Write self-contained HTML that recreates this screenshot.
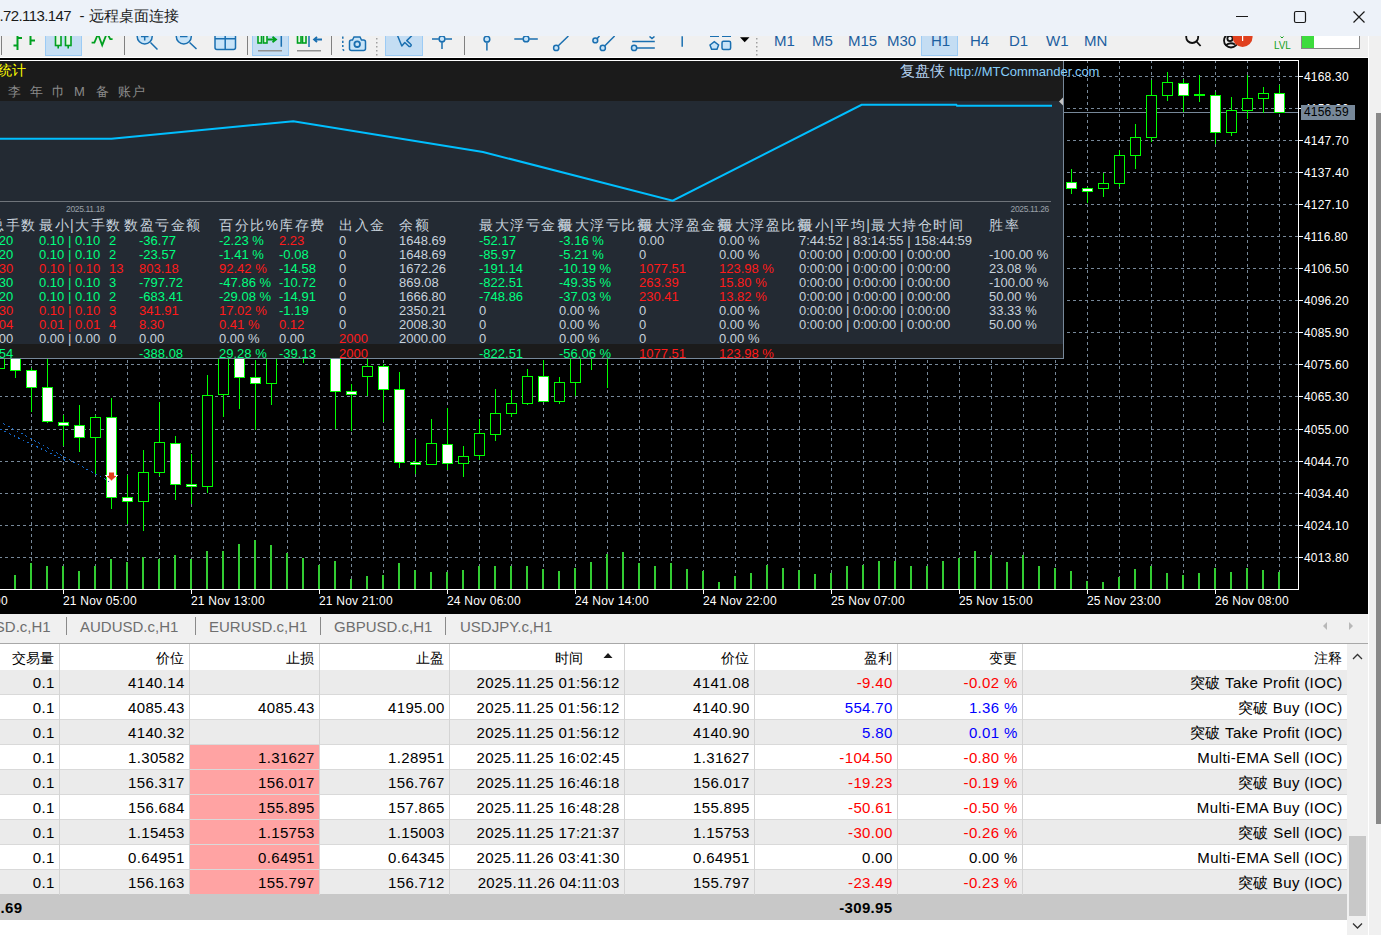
<!DOCTYPE html>
<html><head><meta charset="utf-8">
<style>
html,body{margin:0;padding:0;width:1381px;height:935px;overflow:hidden;background:#ffffff;font-family:"Liberation Sans",sans-serif;}
#root{position:relative;width:1381px;height:935px;overflow:hidden;}
.pl{position:absolute;left:1304px;font-size:12px;line-height:16px;color:#ffffff;white-space:nowrap;letter-spacing:0.2px}
.tl{position:absolute;top:593px;font-size:12px;line-height:16px;color:#ffffff;white-space:nowrap;letter-spacing:0.2px}
.curp{position:absolute;left:1301px;top:105px;width:54px;height:15px;background:#778899;color:#000;font-size:12px;line-height:15px;padding-left:3px;box-sizing:border-box;letter-spacing:0.2px}
.st{position:absolute;font-size:13px;line-height:16px;white-space:nowrap}
.sh{position:absolute;top:217px;font-size:14px;line-height:16px;color:#c8d2dc;white-space:nowrap;letter-spacing:1.5px}
.th{position:absolute;top:645px;height:26px;line-height:26px;text-align:right;font-size:14px;color:#000;white-space:nowrap}
.td{position:absolute;height:25px;line-height:25px;text-align:right;font-size:15px;letter-spacing:0.35px;white-space:nowrap}
.tab{position:absolute;top:613px;height:28px;line-height:28px;font-size:15px;color:#6e6e6e;white-space:nowrap}
.tf{position:absolute;top:-5.5px;font-size:15px;line-height:20px;color:#1c5fa0;white-space:nowrap}
</style></head><body><div id="root">
<!-- title bar -->
<div style="position:absolute;left:0;top:0;width:1381px;height:36px;background:#edf2f9"></div>
<div style="position:absolute;left:-0.5px;top:7px;font-size:15px;line-height:18px;color:#1a1a1a;white-space:nowrap;letter-spacing:-0.6px">.72.113.147</div>
<div style="position:absolute;left:79.5px;top:7px;font-size:15px;line-height:18px;color:#1a1a1a;white-space:nowrap">-</div>
<div style="position:absolute;left:88.6px;top:7px;font-size:15px;line-height:18px;color:#1a1a1a;white-space:nowrap">远程桌面连接</div>
<svg style="position:absolute;left:1230px;top:5px" width="150" height="24">
 <rect x="6" y="11" width="12" height="1" fill="#1a1a1a"/>
 <rect x="64.5" y="6.5" width="11" height="11" rx="1.5" fill="none" stroke="#1a1a1a" stroke-width="1.2"/>
 <path d="M123.5 6.5 L134.5 17.5 M134.5 6.5 L123.5 17.5" stroke="#1a1a1a" stroke-width="1.2"/>
</svg>
<!-- toolbar -->
<div style="position:absolute;left:0;top:36px;width:1368px;height:21px;background:#f0f0f0;overflow:hidden">
<svg width="1368" height="21" style="position:absolute;left:0;top:0" viewBox="0 36 1368 21">
<g fill="#808080">
<rect x="1" y="36" width="1" height="19"/><rect x="124" y="36" width="1" height="19"/><rect x="247" y="36" width="1" height="19"/>
<rect x="331" y="36" width="1" height="19"/><rect x="464" y="36" width="1" height="19"/>
</g>
<g fill="#c4ddf3" stroke="#9ccbf5" stroke-width="1">
<rect x="45.5" y="30.5" width="36" height="25"/>
<rect x="252.5" y="30.5" width="36" height="25"/>
<rect x="385.5" y="30.5" width="37" height="25"/>
<rect x="921.5" y="30.5" width="36" height="25"/>
</g>
<g stroke="#00a020" stroke-width="2" fill="none">
<path d="M17.5 34 V50 M13.5 45.5 H17.5 M17.5 38 H22"/>
<path d="M30.5 34 V45 M30.5 40.5 H35"/>
<path d="M91.6 42.7 H94.4 L98 34 L102.2 45.2 L107 33 L110.3 39.1 H112.6" stroke-width="1.8"/>
</g>
<g stroke="#00a020" stroke-width="1.6" fill="#e4f8e4">
<rect x="55.5" y="33" width="5.5" height="12.5"/><rect x="65.5" y="33" width="5.5" height="12.5"/>
</g>
<g stroke="#00a020" stroke-width="1.6"><path d="M58.2 45.5 V48.5 M68.2 45.5 V48.5"/></g>
<g stroke="#1a6fb0" stroke-width="1.5" fill="#c8e4f8">
<circle cx="144.7" cy="36.5" r="7.5"/><circle cx="183.8" cy="36.5" r="7.5"/>
<rect x="215" y="33" width="20.5" height="16.5" rx="2"/>
<path d="M349.5 42 Q349.5 40 351.5 40 H352.5 L354 37 H360 L361.5 40 H363.5 Q365.5 40 365.5 42 V48.5 Q365.5 50.5 363.5 50.5 H351.5 Q349.5 50.5 349.5 48.5 Z"/>
<circle cx="442" cy="38.9" r="2.9"/><circle cx="486.9" cy="39.2" r="2.9"/><circle cx="526.1" cy="38.9" r="2.9"/>
<circle cx="556.2" cy="47.9" r="2.6"/><circle cx="595.3" cy="40.4" r="2.4"/><circle cx="602.8" cy="47.9" r="2.6"/>
<circle cx="634.1" cy="47.9" r="2.6"/>
<path d="M710 45 l4.3 -3.3 l4.3 3.3 l-1.6 4.3 h-5.4 z"/>
<rect x="722" y="41.2" width="8.6" height="8.2" rx="1.5"/>
</g>
<g stroke="#1a6fb0" stroke-width="1.5" fill="none">
<path d="M144.7 34 V40.5 M141 36.5 H148.5"/><path d="M150.5 42.5 L157.5 49.5"/>
<path d="M180 36.5 H187.5"/><path d="M189.6 42.5 L196.5 49"/>
<path d="M215 38.7 H235.5 M225.2 33 V49.5"/>
<path d="M281.3 34 V46.7 M309 36 V47"/>
<path d="M342.8 36.5 V48.5 q0 2 2.5 2.5" stroke-dasharray="2.2,2"/>
<path d="M396.5 33 L401.8 46 L404.8 42.5 L408.8 46.3 Q409.8 47 410.8 46 Q411.6 45 410.8 44.3 L406.8 40.6 L411.5 36 L413 33 Z" stroke-linejoin="round"/>
<path d="M432 38.9 H438.8 M445.2 38.9 H452 M442 42.1 V49.1"/>
<path d="M486.9 42.4 V50.5"/>
<path d="M514.3 38.9 H522.9 M529.3 38.9 H537.8"/>
<path d="M558.3 45.8 L568.4 36"/><path d="M597.2 38.5 L599.5 36"/><path d="M604.9 45.8 L614.6 36"/>
<path d="M632.2 41.5 H654.8 M636.7 47.9 H654.8"/><path d="M649.5 36.5 l2.5 2 l2.5 -2"/>
<path d="M682.2 36.3 V46.7"/>
<path d="M710 36.3 H719 M722 36.3 H731"/>
</g>
<g fill="none" stroke-width="1.8">
<path d="M267.5 39.5 H276 M272.5 36.8 L276 39.5 L272.5 42.2" stroke="#00a020"/>
<path d="M314 39.5 H322 M317 36.8 L314 39.5 L317 42.2" stroke="#1a6fb0"/>
</g>
<g stroke="#00a020" stroke-width="1.6" fill="#e4f8e4">
<rect x="258" y="33" width="3.5" height="10"/><rect x="263.5" y="33" width="3.5" height="10"/>
<rect x="297.5" y="33" width="3.5" height="10"/><rect x="302.5" y="33" width="3.5" height="10"/>
</g>
<g fill="#909090"><rect x="258" y="50" width="24" height="1.5"/><rect x="297" y="50" width="24" height="1.5"/></g>
<circle cx="357.2" cy="44.2" r="2.8" fill="none" stroke="#1a6fb0" stroke-width="1.8"/>
<path d="M740 37.2 H749.5 L744.7 42.2 Z" fill="#000"/>
<g fill="#a0a0a0"><rect x="376" y="38" width="1.5" height="1.5"/><rect x="376" y="42" width="1.5" height="1.5"/><rect x="376" y="46" width="1.5" height="1.5"/><rect x="376" y="50" width="1.5" height="1.5"/><rect x="376" y="54" width="1.5" height="1.5"/>
<rect x="756" y="38" width="1.5" height="1.5"/><rect x="756" y="42" width="1.5" height="1.5"/><rect x="756" y="46" width="1.5" height="1.5"/><rect x="756" y="50" width="1.5" height="1.5"/><rect x="756" y="54" width="1.5" height="1.5"/>
</g>
<g stroke="#111" stroke-width="1.8" fill="none"><circle cx="1192.2" cy="37" r="6"/><path d="M1196.5 41.5 L1200.6 46"/>
<circle cx="1231" cy="40.5" r="7"/><circle cx="1230" cy="38.5" r="2.6"/><path d="M1225.5 45.5 Q1230 41.5 1235 44.5"/></g>
<circle cx="1242.6" cy="37" r="10" fill="#e0401e"/>
<rect x="1242" y="36" width="1.2" height="5" fill="#fff"/>
<path d="M1280.5 36.5 l1.5 1.5 l1.5 -1.5" fill="none" stroke="#10a020" stroke-width="1"/>
<rect x="1301.5" y="35.5" width="58" height="13" fill="#ffffff" stroke="#888" stroke-width="1"/>
<rect x="1302" y="36" width="12" height="12" fill="#3ddc3d"/>
</svg>
<div class="tf" style="left:774px">M1</div><div class="tf" style="left:812px">M5</div><div class="tf" style="left:848px">M15</div>
<div class="tf" style="left:887px">M30</div><div class="tf" style="left:931px">H1</div><div class="tf" style="left:970px">H4</div>
<div class="tf" style="left:1009px">D1</div><div class="tf" style="left:1046px">W1</div><div class="tf" style="left:1084px">MN</div>
<div style="position:absolute;left:1274px;top:3px;font-size:11px;line-height:12px;color:#10a020;transform:scaleX(0.9);transform-origin:left">LVL</div>

</div>
<div style="position:absolute;left:1368px;top:36px;width:13px;height:899px;background:#f0f0f0"></div>
<div style="position:absolute;left:1376px;top:113px;width:5px;height:711px;background:#888888"></div>
<div style="position:absolute;left:1368px;top:36px;width:1px;height:899px;background:#ffffff"></div>
<div style="position:absolute;left:0;top:57px;width:1368px;height:1px;background:#ffffff"></div>
<!-- chart -->
<div style="position:absolute;left:0;top:58px;width:1368px;height:556px;background:#000000"></div>
<svg width="1368" height="556" viewBox="0 58 1368 556" style="position:absolute;left:0;top:58px" shape-rendering="crispEdges"><line x1="0" y1="76.5" x2="1298" y2="76.5" stroke="#778899" stroke-width="1" stroke-dasharray="3,3" stroke-dashoffset="1"/><line x1="0" y1="108.5" x2="1298" y2="108.5" stroke="#778899" stroke-width="1" stroke-dasharray="3,3" stroke-dashoffset="1"/><line x1="0" y1="140.5" x2="1298" y2="140.5" stroke="#778899" stroke-width="1" stroke-dasharray="3,3" stroke-dashoffset="1"/><line x1="0" y1="172.5" x2="1298" y2="172.5" stroke="#778899" stroke-width="1" stroke-dasharray="3,3" stroke-dashoffset="1"/><line x1="0" y1="204.5" x2="1298" y2="204.5" stroke="#778899" stroke-width="1" stroke-dasharray="3,3" stroke-dashoffset="1"/><line x1="0" y1="236.5" x2="1298" y2="236.5" stroke="#778899" stroke-width="1" stroke-dasharray="3,3" stroke-dashoffset="1"/><line x1="0" y1="268.5" x2="1298" y2="268.5" stroke="#778899" stroke-width="1" stroke-dasharray="3,3" stroke-dashoffset="1"/><line x1="0" y1="300.5" x2="1298" y2="300.5" stroke="#778899" stroke-width="1" stroke-dasharray="3,3" stroke-dashoffset="1"/><line x1="0" y1="332.5" x2="1298" y2="332.5" stroke="#778899" stroke-width="1" stroke-dasharray="3,3" stroke-dashoffset="1"/><line x1="0" y1="364.5" x2="1298" y2="364.5" stroke="#778899" stroke-width="1" stroke-dasharray="3,3" stroke-dashoffset="1"/><line x1="0" y1="396.5" x2="1298" y2="396.5" stroke="#778899" stroke-width="1" stroke-dasharray="3,3" stroke-dashoffset="1"/><line x1="0" y1="429.5" x2="1298" y2="429.5" stroke="#778899" stroke-width="1" stroke-dasharray="3,3" stroke-dashoffset="1"/><line x1="0" y1="461.5" x2="1298" y2="461.5" stroke="#778899" stroke-width="1" stroke-dasharray="3,3" stroke-dashoffset="1"/><line x1="0" y1="493.5" x2="1298" y2="493.5" stroke="#778899" stroke-width="1" stroke-dasharray="3,3" stroke-dashoffset="1"/><line x1="0" y1="525.5" x2="1298" y2="525.5" stroke="#778899" stroke-width="1" stroke-dasharray="3,3" stroke-dashoffset="1"/><line x1="0" y1="557.5" x2="1298" y2="557.5" stroke="#778899" stroke-width="1" stroke-dasharray="3,3" stroke-dashoffset="1"/><line x1="31.5" y1="60" x2="31.5" y2="589" stroke="#778899" stroke-width="1" stroke-dasharray="3,3"/><line x1="63.5" y1="60" x2="63.5" y2="589" stroke="#778899" stroke-width="1" stroke-dasharray="3,3"/><line x1="95.5" y1="60" x2="95.5" y2="589" stroke="#778899" stroke-width="1" stroke-dasharray="3,3"/><line x1="127.5" y1="60" x2="127.5" y2="589" stroke="#778899" stroke-width="1" stroke-dasharray="3,3"/><line x1="159.5" y1="60" x2="159.5" y2="589" stroke="#778899" stroke-width="1" stroke-dasharray="3,3"/><line x1="191.5" y1="60" x2="191.5" y2="589" stroke="#778899" stroke-width="1" stroke-dasharray="3,3"/><line x1="223.5" y1="60" x2="223.5" y2="589" stroke="#778899" stroke-width="1" stroke-dasharray="3,3"/><line x1="255.5" y1="60" x2="255.5" y2="589" stroke="#778899" stroke-width="1" stroke-dasharray="3,3"/><line x1="287.5" y1="60" x2="287.5" y2="589" stroke="#778899" stroke-width="1" stroke-dasharray="3,3"/><line x1="319.5" y1="60" x2="319.5" y2="589" stroke="#778899" stroke-width="1" stroke-dasharray="3,3"/><line x1="351.5" y1="60" x2="351.5" y2="589" stroke="#778899" stroke-width="1" stroke-dasharray="3,3"/><line x1="383.5" y1="60" x2="383.5" y2="589" stroke="#778899" stroke-width="1" stroke-dasharray="3,3"/><line x1="415.5" y1="60" x2="415.5" y2="589" stroke="#778899" stroke-width="1" stroke-dasharray="3,3"/><line x1="447.5" y1="60" x2="447.5" y2="589" stroke="#778899" stroke-width="1" stroke-dasharray="3,3"/><line x1="479.5" y1="60" x2="479.5" y2="589" stroke="#778899" stroke-width="1" stroke-dasharray="3,3"/><line x1="511.5" y1="60" x2="511.5" y2="589" stroke="#778899" stroke-width="1" stroke-dasharray="3,3"/><line x1="543.5" y1="60" x2="543.5" y2="589" stroke="#778899" stroke-width="1" stroke-dasharray="3,3"/><line x1="575.5" y1="60" x2="575.5" y2="589" stroke="#778899" stroke-width="1" stroke-dasharray="3,3"/><line x1="607.5" y1="60" x2="607.5" y2="589" stroke="#778899" stroke-width="1" stroke-dasharray="3,3"/><line x1="639.5" y1="60" x2="639.5" y2="589" stroke="#778899" stroke-width="1" stroke-dasharray="3,3"/><line x1="671.5" y1="60" x2="671.5" y2="589" stroke="#778899" stroke-width="1" stroke-dasharray="3,3"/><line x1="703.5" y1="60" x2="703.5" y2="589" stroke="#778899" stroke-width="1" stroke-dasharray="3,3"/><line x1="735.5" y1="60" x2="735.5" y2="589" stroke="#778899" stroke-width="1" stroke-dasharray="3,3"/><line x1="767.5" y1="60" x2="767.5" y2="589" stroke="#778899" stroke-width="1" stroke-dasharray="3,3"/><line x1="799.5" y1="60" x2="799.5" y2="589" stroke="#778899" stroke-width="1" stroke-dasharray="3,3"/><line x1="831.5" y1="60" x2="831.5" y2="589" stroke="#778899" stroke-width="1" stroke-dasharray="3,3"/><line x1="863.5" y1="60" x2="863.5" y2="589" stroke="#778899" stroke-width="1" stroke-dasharray="3,3"/><line x1="895.5" y1="60" x2="895.5" y2="589" stroke="#778899" stroke-width="1" stroke-dasharray="3,3"/><line x1="927.5" y1="60" x2="927.5" y2="589" stroke="#778899" stroke-width="1" stroke-dasharray="3,3"/><line x1="959.5" y1="60" x2="959.5" y2="589" stroke="#778899" stroke-width="1" stroke-dasharray="3,3"/><line x1="991.5" y1="60" x2="991.5" y2="589" stroke="#778899" stroke-width="1" stroke-dasharray="3,3"/><line x1="1023.5" y1="60" x2="1023.5" y2="589" stroke="#778899" stroke-width="1" stroke-dasharray="3,3"/><line x1="1055.5" y1="60" x2="1055.5" y2="589" stroke="#778899" stroke-width="1" stroke-dasharray="3,3"/><line x1="1087.5" y1="60" x2="1087.5" y2="589" stroke="#778899" stroke-width="1" stroke-dasharray="3,3"/><line x1="1119.5" y1="60" x2="1119.5" y2="589" stroke="#778899" stroke-width="1" stroke-dasharray="3,3"/><line x1="1151.5" y1="60" x2="1151.5" y2="589" stroke="#778899" stroke-width="1" stroke-dasharray="3,3"/><line x1="1183.5" y1="60" x2="1183.5" y2="589" stroke="#778899" stroke-width="1" stroke-dasharray="3,3"/><line x1="1215.5" y1="60" x2="1215.5" y2="589" stroke="#778899" stroke-width="1" stroke-dasharray="3,3"/><line x1="1247.5" y1="60" x2="1247.5" y2="589" stroke="#778899" stroke-width="1" stroke-dasharray="3,3"/><line x1="1279.5" y1="60" x2="1279.5" y2="589" stroke="#778899" stroke-width="1" stroke-dasharray="3,3"/><rect x="14" y="575" width="2" height="14" fill="#32cd32"/><rect x="30" y="563" width="2" height="26" fill="#32cd32"/><rect x="46" y="566" width="2" height="23" fill="#32cd32"/><rect x="62" y="566" width="2" height="23" fill="#32cd32"/><rect x="78" y="571" width="2" height="18" fill="#32cd32"/><rect x="94" y="566" width="2" height="23" fill="#32cd32"/><rect x="110" y="559" width="2" height="30" fill="#32cd32"/><rect x="126" y="562" width="2" height="27" fill="#32cd32"/><rect x="142" y="557" width="2" height="32" fill="#32cd32"/><rect x="158" y="559" width="2" height="30" fill="#32cd32"/><rect x="174" y="555" width="2" height="34" fill="#32cd32"/><rect x="190" y="559" width="2" height="30" fill="#32cd32"/><rect x="206" y="551" width="2" height="38" fill="#32cd32"/><rect x="222" y="551" width="2" height="38" fill="#32cd32"/><rect x="238" y="544" width="2" height="45" fill="#32cd32"/><rect x="254" y="540" width="2" height="49" fill="#32cd32"/><rect x="270" y="545" width="2" height="44" fill="#32cd32"/><rect x="286" y="553" width="2" height="36" fill="#32cd32"/><rect x="302" y="558" width="2" height="31" fill="#32cd32"/><rect x="318" y="565" width="2" height="24" fill="#32cd32"/><rect x="334" y="561" width="2" height="28" fill="#32cd32"/><rect x="350" y="579" width="2" height="10" fill="#32cd32"/><rect x="366" y="576" width="2" height="13" fill="#32cd32"/><rect x="382" y="575" width="2" height="14" fill="#32cd32"/><rect x="398" y="563" width="2" height="26" fill="#32cd32"/><rect x="414" y="570" width="2" height="19" fill="#32cd32"/><rect x="430" y="572" width="2" height="17" fill="#32cd32"/><rect x="446" y="572" width="2" height="17" fill="#32cd32"/><rect x="462" y="570" width="2" height="19" fill="#32cd32"/><rect x="478" y="566" width="2" height="23" fill="#32cd32"/><rect x="494" y="566" width="2" height="23" fill="#32cd32"/><rect x="510" y="566" width="2" height="23" fill="#32cd32"/><rect x="526" y="566" width="2" height="23" fill="#32cd32"/><rect x="542" y="569" width="2" height="20" fill="#32cd32"/><rect x="558" y="571" width="2" height="18" fill="#32cd32"/><rect x="574" y="568" width="2" height="21" fill="#32cd32"/><rect x="590" y="562" width="2" height="27" fill="#32cd32"/><rect x="606" y="554" width="2" height="35" fill="#32cd32"/><rect x="622" y="552" width="2" height="37" fill="#32cd32"/><rect x="638" y="563" width="2" height="26" fill="#32cd32"/><rect x="654" y="566" width="2" height="23" fill="#32cd32"/><rect x="670" y="563" width="2" height="26" fill="#32cd32"/><rect x="686" y="569" width="2" height="20" fill="#32cd32"/><rect x="702" y="571" width="2" height="18" fill="#32cd32"/><rect x="718" y="582" width="2" height="7" fill="#32cd32"/><rect x="734" y="576" width="2" height="13" fill="#32cd32"/><rect x="750" y="573" width="2" height="16" fill="#32cd32"/><rect x="766" y="565" width="2" height="24" fill="#32cd32"/><rect x="782" y="568" width="2" height="21" fill="#32cd32"/><rect x="798" y="570" width="2" height="19" fill="#32cd32"/><rect x="814" y="574" width="2" height="15" fill="#32cd32"/><rect x="830" y="573" width="2" height="16" fill="#32cd32"/><rect x="846" y="566" width="2" height="23" fill="#32cd32"/><rect x="862" y="565" width="2" height="24" fill="#32cd32"/><rect x="878" y="561" width="2" height="28" fill="#32cd32"/><rect x="894" y="561" width="2" height="28" fill="#32cd32"/><rect x="910" y="566" width="2" height="23" fill="#32cd32"/><rect x="926" y="566" width="2" height="23" fill="#32cd32"/><rect x="942" y="561" width="2" height="28" fill="#32cd32"/><rect x="958" y="558" width="2" height="31" fill="#32cd32"/><rect x="974" y="551" width="2" height="38" fill="#32cd32"/><rect x="990" y="555" width="2" height="34" fill="#32cd32"/><rect x="1006" y="562" width="2" height="27" fill="#32cd32"/><rect x="1022" y="555" width="2" height="34" fill="#32cd32"/><rect x="1038" y="566" width="2" height="23" fill="#32cd32"/><rect x="1054" y="568" width="2" height="21" fill="#32cd32"/><rect x="1070" y="571" width="2" height="18" fill="#32cd32"/><rect x="1086" y="581" width="2" height="8" fill="#32cd32"/><rect x="1102" y="582" width="2" height="7" fill="#32cd32"/><rect x="1118" y="577" width="2" height="12" fill="#32cd32"/><rect x="1134" y="569" width="2" height="20" fill="#32cd32"/><rect x="1150" y="566" width="2" height="23" fill="#32cd32"/><rect x="1166" y="573" width="2" height="16" fill="#32cd32"/><rect x="1182" y="575" width="2" height="14" fill="#32cd32"/><rect x="1198" y="573" width="2" height="16" fill="#32cd32"/><rect x="1214" y="568" width="2" height="21" fill="#32cd32"/><rect x="1230" y="572" width="2" height="17" fill="#32cd32"/><rect x="1246" y="568" width="2" height="21" fill="#32cd32"/><rect x="1262" y="570" width="2" height="19" fill="#32cd32"/><rect x="1278" y="572" width="2" height="17" fill="#32cd32"/><line x1="0" y1="112.5" x2="1298" y2="112.5" stroke="#778899" stroke-width="1"/><rect x="-6" y="300" width="11" height="69" fill="#00ff00"/><rect x="-5" y="301" width="9" height="67" fill="#000000"/><rect x="15" y="371" width="1" height="7" fill="#00ff00"/><rect x="10" y="300" width="11" height="71" fill="#00ff00"/><rect x="11" y="301" width="9" height="69" fill="#ffffff"/><rect x="31" y="368" width="1" height="2" fill="#00ff00"/><rect x="31" y="388" width="1" height="24" fill="#00ff00"/><rect x="26" y="370" width="11" height="18" fill="#00ff00"/><rect x="27" y="371" width="9" height="16" fill="#ffffff"/><rect x="47" y="300" width="1" height="87" fill="#00ff00"/><rect x="47" y="422" width="1" height="1" fill="#00ff00"/><rect x="42" y="387" width="11" height="35" fill="#00ff00"/><rect x="43" y="388" width="9" height="33" fill="#ffffff"/><rect x="63" y="415" width="1" height="7" fill="#00ff00"/><rect x="63" y="426" width="1" height="20" fill="#00ff00"/><rect x="58" y="422" width="11" height="4" fill="#00ff00"/><rect x="59" y="423" width="9" height="2" fill="#ffffff"/><rect x="79" y="405" width="1" height="20" fill="#00ff00"/><rect x="79" y="438" width="1" height="14" fill="#00ff00"/><rect x="74" y="425" width="11" height="13" fill="#00ff00"/><rect x="75" y="426" width="9" height="11" fill="#ffffff"/><rect x="95" y="415" width="1" height="2" fill="#00ff00"/><rect x="95" y="438" width="1" height="37" fill="#00ff00"/><rect x="90" y="417" width="11" height="21" fill="#00ff00"/><rect x="91" y="418" width="9" height="19" fill="#000000"/><rect x="111" y="398" width="1" height="19" fill="#00ff00"/><rect x="111" y="498" width="1" height="11" fill="#00ff00"/><rect x="106" y="417" width="11" height="81" fill="#00ff00"/><rect x="107" y="418" width="9" height="79" fill="#ffffff"/><rect x="127" y="475" width="1" height="22" fill="#00ff00"/><rect x="127" y="502" width="1" height="22" fill="#00ff00"/><rect x="122" y="497" width="11" height="5" fill="#00ff00"/><rect x="123" y="498" width="9" height="3" fill="#ffffff"/><rect x="143" y="450" width="1" height="22" fill="#00ff00"/><rect x="143" y="502" width="1" height="29" fill="#00ff00"/><rect x="138" y="472" width="11" height="30" fill="#00ff00"/><rect x="139" y="473" width="9" height="28" fill="#000000"/><rect x="159" y="402" width="1" height="40" fill="#00ff00"/><rect x="159" y="473" width="1" height="3" fill="#00ff00"/><rect x="154" y="442" width="11" height="31" fill="#00ff00"/><rect x="155" y="443" width="9" height="29" fill="#000000"/><rect x="175" y="436" width="1" height="7" fill="#00ff00"/><rect x="175" y="485" width="1" height="15" fill="#00ff00"/><rect x="170" y="443" width="11" height="42" fill="#00ff00"/><rect x="171" y="444" width="9" height="40" fill="#ffffff"/><rect x="191" y="454" width="1" height="30" fill="#00ff00"/><rect x="191" y="487" width="1" height="17" fill="#00ff00"/><rect x="186" y="484" width="11" height="3" fill="#00ff00"/><rect x="187" y="485" width="9" height="1" fill="#ffffff"/><rect x="207" y="375" width="1" height="20" fill="#00ff00"/><rect x="207" y="487" width="1" height="6" fill="#00ff00"/><rect x="202" y="395" width="11" height="92" fill="#00ff00"/><rect x="203" y="396" width="9" height="90" fill="#000000"/><rect x="223" y="395" width="1" height="22" fill="#00ff00"/><rect x="218" y="300" width="11" height="95" fill="#00ff00"/><rect x="219" y="301" width="9" height="93" fill="#000000"/><rect x="239" y="378" width="1" height="31" fill="#00ff00"/><rect x="234" y="300" width="11" height="78" fill="#00ff00"/><rect x="235" y="301" width="9" height="76" fill="#ffffff"/><rect x="255" y="360" width="1" height="17" fill="#00ff00"/><rect x="255" y="384" width="1" height="46" fill="#00ff00"/><rect x="250" y="377" width="11" height="7" fill="#00ff00"/><rect x="251" y="378" width="9" height="5" fill="#ffffff"/><rect x="271" y="384" width="1" height="21" fill="#00ff00"/><rect x="266" y="300" width="11" height="84" fill="#00ff00"/><rect x="267" y="301" width="9" height="82" fill="#000000"/><rect x="303" y="321" width="1" height="42" fill="#00ff00"/><rect x="298" y="300" width="11" height="21" fill="#00ff00"/><rect x="299" y="301" width="9" height="19" fill="#000000"/><rect x="335" y="392" width="1" height="37" fill="#00ff00"/><rect x="330" y="300" width="11" height="92" fill="#00ff00"/><rect x="331" y="301" width="9" height="90" fill="#ffffff"/><rect x="351" y="384" width="1" height="7" fill="#00ff00"/><rect x="351" y="395" width="1" height="36" fill="#00ff00"/><rect x="346" y="391" width="11" height="4" fill="#00ff00"/><rect x="347" y="392" width="9" height="2" fill="#ffffff"/><rect x="367" y="300" width="1" height="66" fill="#00ff00"/><rect x="367" y="377" width="1" height="19" fill="#00ff00"/><rect x="362" y="366" width="11" height="11" fill="#00ff00"/><rect x="363" y="367" width="9" height="9" fill="#000000"/><rect x="383" y="364" width="1" height="2" fill="#00ff00"/><rect x="383" y="390" width="1" height="32" fill="#00ff00"/><rect x="378" y="366" width="11" height="24" fill="#00ff00"/><rect x="379" y="367" width="9" height="22" fill="#ffffff"/><rect x="399" y="372" width="1" height="17" fill="#00ff00"/><rect x="399" y="463" width="1" height="5" fill="#00ff00"/><rect x="394" y="389" width="11" height="74" fill="#00ff00"/><rect x="395" y="390" width="9" height="72" fill="#ffffff"/><rect x="415" y="439" width="1" height="23" fill="#00ff00"/><rect x="415" y="465" width="1" height="9" fill="#00ff00"/><rect x="410" y="462" width="11" height="3" fill="#00ff00"/><rect x="411" y="463" width="9" height="1" fill="#ffffff"/><rect x="431" y="419" width="1" height="24" fill="#00ff00"/><rect x="426" y="443" width="11" height="22" fill="#00ff00"/><rect x="427" y="444" width="9" height="20" fill="#000000"/><rect x="447" y="408" width="1" height="36" fill="#00ff00"/><rect x="447" y="464" width="1" height="6" fill="#00ff00"/><rect x="442" y="444" width="11" height="20" fill="#00ff00"/><rect x="443" y="445" width="9" height="18" fill="#ffffff"/><rect x="463" y="446" width="1" height="10" fill="#00ff00"/><rect x="463" y="464" width="1" height="13" fill="#00ff00"/><rect x="458" y="456" width="11" height="8" fill="#00ff00"/><rect x="459" y="457" width="9" height="6" fill="#000000"/><rect x="479" y="419" width="1" height="14" fill="#00ff00"/><rect x="479" y="456" width="1" height="4" fill="#00ff00"/><rect x="474" y="433" width="11" height="23" fill="#00ff00"/><rect x="475" y="434" width="9" height="21" fill="#000000"/><rect x="495" y="389" width="1" height="24" fill="#00ff00"/><rect x="495" y="435" width="1" height="6" fill="#00ff00"/><rect x="490" y="413" width="11" height="22" fill="#00ff00"/><rect x="491" y="414" width="9" height="20" fill="#000000"/><rect x="511" y="390" width="1" height="13" fill="#00ff00"/><rect x="511" y="414" width="1" height="3" fill="#00ff00"/><rect x="506" y="403" width="11" height="11" fill="#00ff00"/><rect x="507" y="404" width="9" height="9" fill="#000000"/><rect x="527" y="369" width="1" height="7" fill="#00ff00"/><rect x="527" y="404" width="1" height="1" fill="#00ff00"/><rect x="522" y="376" width="11" height="28" fill="#00ff00"/><rect x="523" y="377" width="9" height="26" fill="#000000"/><rect x="543" y="360" width="1" height="16" fill="#00ff00"/><rect x="538" y="376" width="11" height="26" fill="#00ff00"/><rect x="539" y="377" width="9" height="24" fill="#ffffff"/><rect x="559" y="377" width="1" height="5" fill="#00ff00"/><rect x="559" y="402" width="1" height="2" fill="#00ff00"/><rect x="554" y="382" width="11" height="20" fill="#00ff00"/><rect x="555" y="383" width="9" height="18" fill="#000000"/><rect x="575" y="383" width="1" height="13" fill="#00ff00"/><rect x="570" y="300" width="11" height="83" fill="#00ff00"/><rect x="571" y="301" width="9" height="81" fill="#000000"/><rect x="591" y="321" width="1" height="49" fill="#00ff00"/><rect x="586" y="300" width="11" height="21" fill="#00ff00"/><rect x="587" y="301" width="9" height="19" fill="#000000"/><rect x="607" y="321" width="1" height="67" fill="#00ff00"/><rect x="602" y="300" width="11" height="21" fill="#00ff00"/><rect x="603" y="301" width="9" height="19" fill="#000000"/><rect x="1071" y="169" width="1" height="13" fill="#00ff00"/><rect x="1071" y="189" width="1" height="5" fill="#00ff00"/><rect x="1066" y="182" width="11" height="7" fill="#00ff00"/><rect x="1067" y="183" width="9" height="5" fill="#ffffff"/><rect x="1087" y="187" width="1" height="1" fill="#00ff00"/><rect x="1087" y="192" width="1" height="11" fill="#00ff00"/><rect x="1082" y="188" width="11" height="4" fill="#00ff00"/><rect x="1083" y="189" width="9" height="2" fill="#ffffff"/><rect x="1103" y="173" width="1" height="10" fill="#00ff00"/><rect x="1103" y="189" width="1" height="8" fill="#00ff00"/><rect x="1098" y="183" width="11" height="6" fill="#00ff00"/><rect x="1099" y="184" width="9" height="4" fill="#000000"/><rect x="1119" y="150" width="1" height="5" fill="#00ff00"/><rect x="1119" y="184" width="1" height="3" fill="#00ff00"/><rect x="1114" y="155" width="11" height="29" fill="#00ff00"/><rect x="1115" y="156" width="9" height="27" fill="#000000"/><rect x="1135" y="124" width="1" height="13" fill="#00ff00"/><rect x="1135" y="156" width="1" height="13" fill="#00ff00"/><rect x="1130" y="137" width="11" height="19" fill="#00ff00"/><rect x="1131" y="138" width="9" height="17" fill="#000000"/><rect x="1151" y="80" width="1" height="15" fill="#00ff00"/><rect x="1151" y="138" width="1" height="4" fill="#00ff00"/><rect x="1146" y="95" width="11" height="43" fill="#00ff00"/><rect x="1147" y="96" width="9" height="41" fill="#000000"/><rect x="1167" y="72" width="1" height="10" fill="#00ff00"/><rect x="1167" y="96" width="1" height="5" fill="#00ff00"/><rect x="1162" y="82" width="11" height="14" fill="#00ff00"/><rect x="1163" y="83" width="9" height="12" fill="#000000"/><rect x="1183" y="79" width="1" height="4" fill="#00ff00"/><rect x="1183" y="96" width="1" height="16" fill="#00ff00"/><rect x="1178" y="83" width="11" height="13" fill="#00ff00"/><rect x="1179" y="84" width="9" height="11" fill="#ffffff"/><rect x="1199" y="75" width="1" height="19" fill="#00ff00"/><rect x="1199" y="96" width="1" height="6" fill="#00ff00"/><rect x="1194" y="94" width="11" height="2" fill="#00ff00"/><rect x="1215" y="92" width="1" height="3" fill="#00ff00"/><rect x="1215" y="133" width="1" height="11" fill="#00ff00"/><rect x="1210" y="95" width="11" height="38" fill="#00ff00"/><rect x="1211" y="96" width="9" height="36" fill="#ffffff"/><rect x="1231" y="97" width="1" height="13" fill="#00ff00"/><rect x="1231" y="133" width="1" height="3" fill="#00ff00"/><rect x="1226" y="110" width="11" height="23" fill="#00ff00"/><rect x="1227" y="111" width="9" height="21" fill="#000000"/><rect x="1247" y="75" width="1" height="23" fill="#00ff00"/><rect x="1247" y="111" width="1" height="8" fill="#00ff00"/><rect x="1242" y="98" width="11" height="13" fill="#00ff00"/><rect x="1243" y="99" width="9" height="11" fill="#000000"/><rect x="1263" y="87" width="1" height="6" fill="#00ff00"/><rect x="1263" y="99" width="1" height="14" fill="#00ff00"/><rect x="1258" y="93" width="11" height="6" fill="#00ff00"/><rect x="1259" y="94" width="9" height="4" fill="#000000"/><rect x="1279" y="85" width="1" height="8" fill="#00ff00"/><rect x="1274" y="93" width="11" height="20" fill="#00ff00"/><rect x="1275" y="94" width="9" height="18" fill="#ffffff"/><line x1="3.3" y1="423.5" x2="109" y2="481.4" stroke="#1466c4" stroke-width="1" stroke-dasharray="2,3"/><line x1="0" y1="429.1" x2="66" y2="460.7" stroke="#1466c4" stroke-width="1" stroke-dasharray="2,3"/><path d="M108.5 472 H114.5 V475.5 H117.5 L111.5 481 L105.5 475.5 H108.5 Z" fill="#e0401a" stroke="#ffffff" stroke-width="1" shape-rendering="geometricPrecision"/><rect x="0" y="60" width="1298" height="1" fill="#ffffff"/><rect x="1298" y="60" width="1" height="530" fill="#ffffff"/><rect x="0" y="589" width="1299" height="1" fill="#ffffff"/><rect x="1299" y="76" width="4" height="1" fill="#ffffff"/><rect x="1299" y="108" width="4" height="1" fill="#ffffff"/><rect x="1299" y="140" width="4" height="1" fill="#ffffff"/><rect x="1299" y="172" width="4" height="1" fill="#ffffff"/><rect x="1299" y="204" width="4" height="1" fill="#ffffff"/><rect x="1299" y="236" width="4" height="1" fill="#ffffff"/><rect x="1299" y="268" width="4" height="1" fill="#ffffff"/><rect x="1299" y="300" width="4" height="1" fill="#ffffff"/><rect x="1299" y="332" width="4" height="1" fill="#ffffff"/><rect x="1299" y="364" width="4" height="1" fill="#ffffff"/><rect x="1299" y="396" width="4" height="1" fill="#ffffff"/><rect x="1299" y="429" width="4" height="1" fill="#ffffff"/><rect x="1299" y="461" width="4" height="1" fill="#ffffff"/><rect x="1299" y="493" width="4" height="1" fill="#ffffff"/><rect x="1299" y="525" width="4" height="1" fill="#ffffff"/><rect x="1299" y="557" width="4" height="1" fill="#ffffff"/><rect x="63" y="590" width="1" height="4" fill="#ffffff"/><rect x="191" y="590" width="1" height="4" fill="#ffffff"/><rect x="319" y="590" width="1" height="4" fill="#ffffff"/><rect x="447" y="590" width="1" height="4" fill="#ffffff"/><rect x="575" y="590" width="1" height="4" fill="#ffffff"/><rect x="703" y="590" width="1" height="4" fill="#ffffff"/><rect x="831" y="590" width="1" height="4" fill="#ffffff"/><rect x="959" y="590" width="1" height="4" fill="#ffffff"/><rect x="1087" y="590" width="1" height="4" fill="#ffffff"/><rect x="1215" y="590" width="1" height="4" fill="#ffffff"/></svg>
<div class="pl" style="top:69px">4168.30</div><div class="pl" style="top:101px">4158.00</div><div class="pl" style="top:133px">4147.70</div><div class="pl" style="top:165px">4137.40</div><div class="pl" style="top:197px">4127.10</div><div class="pl" style="top:229px">4116.80</div><div class="pl" style="top:261px">4106.50</div><div class="pl" style="top:293px">4096.20</div><div class="pl" style="top:325px">4085.90</div><div class="pl" style="top:357px">4075.60</div><div class="pl" style="top:389px">4065.30</div><div class="pl" style="top:422px">4055.00</div><div class="pl" style="top:454px">4044.70</div><div class="pl" style="top:486px">4034.40</div><div class="pl" style="top:518px">4024.10</div><div class="pl" style="top:550px">4013.80</div><div class="tl" style="left:63px">21 Nov 05:00</div><div class="tl" style="left:191px">21 Nov 13:00</div><div class="tl" style="left:319px">21 Nov 21:00</div><div class="tl" style="left:447px">24 Nov 06:00</div><div class="tl" style="left:575px">24 Nov 14:00</div><div class="tl" style="left:703px">24 Nov 22:00</div><div class="tl" style="left:831px">25 Nov 07:00</div><div class="tl" style="left:959px">25 Nov 15:00</div><div class="tl" style="left:1087px">25 Nov 23:00</div><div class="tl" style="left:1215px">26 Nov 08:00</div><div class="tl" style="left:-66px">20 Nov 21:00</div><div class="curp">4156.59</div>
<svg width="1064" height="298" style="position:absolute;left:0;top:61px" ><rect x="0" y="0" width="1063" height="297" fill="#1b1b1b"/><rect x="0" y="40" width="1063" height="243" fill="#232a33"/><rect x="0" y="283" width="1063" height="14" fill="#1b1b1b"/><rect x="0" y="140" width="1051" height="1" fill="#6f747a"/><polyline fill="none" stroke="#00bfff" stroke-width="2" points="0,77.80000000000001 111.5,77.80000000000001 293.3,60.2 483,91 672.7,139.6 861.6,43.8 956.3,43.8 957,44.8 1052,44.8"/><path d="M1059 40.5 L1063 36.5 V44.5 Z" fill="#c4c4c4"/><rect x="1063" y="0" width="1" height="298" fill="#778899"/><rect x="0" y="297" width="1064" height="1" fill="#778899"/></svg>
<div style="position:absolute;left:-2px;top:62px;font-size:14px;line-height:16px;color:#ffff00;white-space:nowrap">统计</div>
<div style="position:absolute;left:8px;top:84px;font-size:13px;line-height:16px;color:#8a8a8a;white-space:nowrap;letter-spacing:9px">李年巾<span style="letter-spacing:11px">M</span>备<span style="letter-spacing:1px">账户</span></div>
<div style="position:absolute;left:900px;top:62px;font-size:15px;line-height:18px;color:#b4d2f0;white-space:nowrap">复盘侠 <span style="font-size:13px;color:#87cefa">http://MTCommander.com</span></div>
<div style="position:absolute;left:66px;top:203px;font-size:8.5px;line-height:12px;color:#9aa0a8;white-space:nowrap;letter-spacing:-0.35px">2025.11.18</div>
<div style="position:absolute;left:1010.5px;top:203px;font-size:8.5px;line-height:12px;color:#9aa0a8;white-space:nowrap;letter-spacing:-0.35px">2025.11.26</div>
<div class="st" style="left:-12px;top:232.5px;color:#00ff7f">0.20</div><div class="st" style="left:39px;top:232.5px;color:#00ff7f">0.10 | 0.10</div><div class="st" style="left:109px;top:232.5px;color:#00ff7f">2</div><div class="st" style="left:139px;top:232.5px;color:#00ff7f">-36.77</div><div class="st" style="left:219px;top:232.5px;color:#00ff7f">-2.23 %</div><div class="st" style="left:279px;top:232.5px;color:#ff1a1a">2.23</div><div class="st" style="left:339px;top:232.5px;color:#c8d2dc">0</div><div class="st" style="left:399px;top:232.5px;color:#c8d2dc">1648.69</div><div class="st" style="left:479px;top:232.5px;color:#00ff7f">-52.17</div><div class="st" style="left:559px;top:232.5px;color:#00ff7f">-3.16 %</div><div class="st" style="left:639px;top:232.5px;color:#c8d2dc">0.00</div><div class="st" style="left:719px;top:232.5px;color:#c8d2dc">0.00 %</div><div class="st" style="left:799px;top:232.5px;color:#c8d2dc">7:44:52 | 83:14:55 | 158:44:59</div><div class="st" style="left:-12px;top:246.5px;color:#00ff7f">0.20</div><div class="st" style="left:39px;top:246.5px;color:#00ff7f">0.10 | 0.10</div><div class="st" style="left:109px;top:246.5px;color:#00ff7f">2</div><div class="st" style="left:139px;top:246.5px;color:#00ff7f">-23.57</div><div class="st" style="left:219px;top:246.5px;color:#00ff7f">-1.41 %</div><div class="st" style="left:279px;top:246.5px;color:#00ff7f">-0.08</div><div class="st" style="left:339px;top:246.5px;color:#c8d2dc">0</div><div class="st" style="left:399px;top:246.5px;color:#c8d2dc">1648.69</div><div class="st" style="left:479px;top:246.5px;color:#00ff7f">-85.97</div><div class="st" style="left:559px;top:246.5px;color:#00ff7f">-5.21 %</div><div class="st" style="left:639px;top:246.5px;color:#c8d2dc">0</div><div class="st" style="left:719px;top:246.5px;color:#c8d2dc">0.00 %</div><div class="st" style="left:799px;top:246.5px;color:#c8d2dc">0:00:00 | 0:00:00 | 0:00:00</div><div class="st" style="left:989px;top:246.5px;color:#c8d2dc">-100.00 %</div><div class="st" style="left:-12px;top:260.5px;color:#ff1a1a">1.30</div><div class="st" style="left:39px;top:260.5px;color:#ff1a1a">0.10 | 0.10</div><div class="st" style="left:109px;top:260.5px;color:#ff1a1a">13</div><div class="st" style="left:139px;top:260.5px;color:#ff1a1a">803.18</div><div class="st" style="left:219px;top:260.5px;color:#ff1a1a">92.42 %</div><div class="st" style="left:279px;top:260.5px;color:#00ff7f">-14.58</div><div class="st" style="left:339px;top:260.5px;color:#c8d2dc">0</div><div class="st" style="left:399px;top:260.5px;color:#c8d2dc">1672.26</div><div class="st" style="left:479px;top:260.5px;color:#00ff7f">-191.14</div><div class="st" style="left:559px;top:260.5px;color:#00ff7f">-10.19 %</div><div class="st" style="left:639px;top:260.5px;color:#ff1a1a">1077.51</div><div class="st" style="left:719px;top:260.5px;color:#ff1a1a">123.98 %</div><div class="st" style="left:799px;top:260.5px;color:#c8d2dc">0:00:00 | 0:00:00 | 0:00:00</div><div class="st" style="left:989px;top:260.5px;color:#c8d2dc">23.08 %</div><div class="st" style="left:-12px;top:274.5px;color:#00ff7f">0.30</div><div class="st" style="left:39px;top:274.5px;color:#00ff7f">0.10 | 0.10</div><div class="st" style="left:109px;top:274.5px;color:#00ff7f">3</div><div class="st" style="left:139px;top:274.5px;color:#00ff7f">-797.72</div><div class="st" style="left:219px;top:274.5px;color:#00ff7f">-47.86 %</div><div class="st" style="left:279px;top:274.5px;color:#00ff7f">-10.72</div><div class="st" style="left:339px;top:274.5px;color:#c8d2dc">0</div><div class="st" style="left:399px;top:274.5px;color:#c8d2dc">869.08</div><div class="st" style="left:479px;top:274.5px;color:#00ff7f">-822.51</div><div class="st" style="left:559px;top:274.5px;color:#00ff7f">-49.35 %</div><div class="st" style="left:639px;top:274.5px;color:#ff1a1a">263.39</div><div class="st" style="left:719px;top:274.5px;color:#ff1a1a">15.80 %</div><div class="st" style="left:799px;top:274.5px;color:#c8d2dc">0:00:00 | 0:00:00 | 0:00:00</div><div class="st" style="left:989px;top:274.5px;color:#c8d2dc">-100.00 %</div><div class="st" style="left:-12px;top:288.5px;color:#00ff7f">0.20</div><div class="st" style="left:39px;top:288.5px;color:#00ff7f">0.10 | 0.10</div><div class="st" style="left:109px;top:288.5px;color:#00ff7f">2</div><div class="st" style="left:139px;top:288.5px;color:#00ff7f">-683.41</div><div class="st" style="left:219px;top:288.5px;color:#00ff7f">-29.08 %</div><div class="st" style="left:279px;top:288.5px;color:#00ff7f">-14.91</div><div class="st" style="left:339px;top:288.5px;color:#c8d2dc">0</div><div class="st" style="left:399px;top:288.5px;color:#c8d2dc">1666.80</div><div class="st" style="left:479px;top:288.5px;color:#00ff7f">-748.86</div><div class="st" style="left:559px;top:288.5px;color:#00ff7f">-37.03 %</div><div class="st" style="left:639px;top:288.5px;color:#ff1a1a">230.41</div><div class="st" style="left:719px;top:288.5px;color:#ff1a1a">13.82 %</div><div class="st" style="left:799px;top:288.5px;color:#c8d2dc">0:00:00 | 0:00:00 | 0:00:00</div><div class="st" style="left:989px;top:288.5px;color:#c8d2dc">50.00 %</div><div class="st" style="left:-12px;top:302.5px;color:#ff1a1a">0.30</div><div class="st" style="left:39px;top:302.5px;color:#ff1a1a">0.10 | 0.10</div><div class="st" style="left:109px;top:302.5px;color:#ff1a1a">3</div><div class="st" style="left:139px;top:302.5px;color:#ff1a1a">341.91</div><div class="st" style="left:219px;top:302.5px;color:#ff1a1a">17.02 %</div><div class="st" style="left:279px;top:302.5px;color:#00ff7f">-1.19</div><div class="st" style="left:339px;top:302.5px;color:#c8d2dc">0</div><div class="st" style="left:399px;top:302.5px;color:#c8d2dc">2350.21</div><div class="st" style="left:479px;top:302.5px;color:#c8d2dc">0</div><div class="st" style="left:559px;top:302.5px;color:#c8d2dc">0.00 %</div><div class="st" style="left:639px;top:302.5px;color:#c8d2dc">0</div><div class="st" style="left:719px;top:302.5px;color:#c8d2dc">0.00 %</div><div class="st" style="left:799px;top:302.5px;color:#c8d2dc">0:00:00 | 0:00:00 | 0:00:00</div><div class="st" style="left:989px;top:302.5px;color:#c8d2dc">33.33 %</div><div class="st" style="left:-12px;top:316.5px;color:#ff1a1a">0.04</div><div class="st" style="left:39px;top:316.5px;color:#ff1a1a">0.01 | 0.01</div><div class="st" style="left:109px;top:316.5px;color:#ff1a1a">4</div><div class="st" style="left:139px;top:316.5px;color:#ff1a1a">8.30</div><div class="st" style="left:219px;top:316.5px;color:#ff1a1a">0.41 %</div><div class="st" style="left:279px;top:316.5px;color:#ff1a1a">0.12</div><div class="st" style="left:339px;top:316.5px;color:#c8d2dc">0</div><div class="st" style="left:399px;top:316.5px;color:#c8d2dc">2008.30</div><div class="st" style="left:479px;top:316.5px;color:#c8d2dc">0</div><div class="st" style="left:559px;top:316.5px;color:#c8d2dc">0.00 %</div><div class="st" style="left:639px;top:316.5px;color:#c8d2dc">0</div><div class="st" style="left:719px;top:316.5px;color:#c8d2dc">0.00 %</div><div class="st" style="left:799px;top:316.5px;color:#c8d2dc">0:00:00 | 0:00:00 | 0:00:00</div><div class="st" style="left:989px;top:316.5px;color:#c8d2dc">50.00 %</div><div class="st" style="left:-12px;top:330.5px;color:#c8d2dc">0.00</div><div class="st" style="left:39px;top:330.5px;color:#c8d2dc">0.00 | 0.00</div><div class="st" style="left:109px;top:330.5px;color:#c8d2dc">0</div><div class="st" style="left:139px;top:330.5px;color:#c8d2dc">0.00</div><div class="st" style="left:219px;top:330.5px;color:#c8d2dc">0.00 %</div><div class="st" style="left:279px;top:330.5px;color:#c8d2dc">0.00</div><div class="st" style="left:339px;top:330.5px;color:#ff1a1a">2000</div><div class="st" style="left:399px;top:330.5px;color:#c8d2dc">2000.00</div><div class="st" style="left:479px;top:330.5px;color:#c8d2dc">0</div><div class="st" style="left:559px;top:330.5px;color:#c8d2dc">0.00 %</div><div class="st" style="left:639px;top:330.5px;color:#c8d2dc">0</div><div class="st" style="left:719px;top:330.5px;color:#c8d2dc">0.00 %</div><div class="st" style="left:-12px;top:345.5px;color:#00ff7f">2.54</div><div class="st" style="left:139px;top:345.5px;color:#00ff7f">-388.08</div><div class="st" style="left:219px;top:345.5px;color:#00ff7f">29.28 %</div><div class="st" style="left:279px;top:345.5px;color:#00ff7f">-39.13</div><div class="st" style="left:339px;top:345.5px;color:#ff1a1a">2000</div><div class="st" style="left:479px;top:345.5px;color:#00ff7f">-822.51</div><div class="st" style="left:559px;top:345.5px;color:#00ff7f">-56.06 %</div><div class="st" style="left:639px;top:345.5px;color:#ff1a1a">1077.51</div><div class="st" style="left:719px;top:345.5px;color:#ff1a1a">123.98 %</div><div class="sh" style="left:-10px">总手数</div><div class="sh" style="left:39px">最小|大手数</div><div class="sh" style="left:124px">数盈亏金额</div><div class="sh" style="left:219px">百分比%</div><div class="sh" style="left:279px">库存费</div><div class="sh" style="left:339px">出入金</div><div class="sh" style="left:399px">余额</div><div class="sh" style="left:479px">最大浮亏金额</div><div class="sh" style="left:559px">最大浮亏比额</div><div class="sh" style="left:639px">最大浮盈金额</div><div class="sh" style="left:719px">最大浮盈比额</div><div class="sh" style="left:799px">最小|平均|最大持仓时间</div><div class="sh" style="left:989px">胜率</div>
<!-- tabs -->
<div style="position:absolute;left:0;top:614px;width:1368px;height:29px;background:#f0f0f0"></div>
<div style="position:absolute;left:0;top:643px;width:1368px;height:1px;background:#a8a8a8"></div>
<div class="tab" style="left:-16px">USD.c,H1</div>
<div class="tab" style="left:80px">AUDUSD.c,H1</div>
<div class="tab" style="left:209px">EURUSD.c,H1</div>
<div class="tab" style="left:334px">GBPUSD.c,H1</div>
<div class="tab" style="left:460px">USDJPY.c,H1</div>
<div style="position:absolute;left:66px;top:617px;width:1px;height:18px;background:#8a8a8a"></div>
<div style="position:absolute;left:195px;top:617px;width:1px;height:18px;background:#8a8a8a"></div>
<div style="position:absolute;left:320px;top:617px;width:1px;height:18px;background:#8a8a8a"></div>
<div style="position:absolute;left:445px;top:617px;width:1px;height:18px;background:#8a8a8a"></div>
<svg style="position:absolute;left:1318px;top:620px" width="40" height="12"><path d="M9 2 L5 6 L9 10 z" fill="#b8b8b8"/><path d="M31 2 L35 6 L31 10 z" fill="#b8b8b8"/></svg>
<!-- table -->
<div style="position:absolute;left:0;top:644px;width:1347px;height:26px;background:#ffffff"></div><div style="position:absolute;left:0;top:670px;width:1347px;height:25px;background:#ebebeb"></div><div style="position:absolute;left:0;top:694px;width:1347px;height:1px;background:#d9d9d9"></div><div style="position:absolute;left:0;top:695px;width:1347px;height:25px;background:#ffffff"></div><div style="position:absolute;left:0;top:719px;width:1347px;height:1px;background:#d9d9d9"></div><div style="position:absolute;left:0;top:720px;width:1347px;height:25px;background:#ebebeb"></div><div style="position:absolute;left:0;top:744px;width:1347px;height:1px;background:#d9d9d9"></div><div style="position:absolute;left:0;top:745px;width:1347px;height:25px;background:#ffffff"></div><div style="position:absolute;left:0;top:769px;width:1347px;height:1px;background:#d9d9d9"></div><div style="position:absolute;left:190px;top:745px;width:129px;height:24px;background:#ffa3a3"></div><div style="position:absolute;left:0;top:770px;width:1347px;height:25px;background:#ebebeb"></div><div style="position:absolute;left:0;top:794px;width:1347px;height:1px;background:#d9d9d9"></div><div style="position:absolute;left:190px;top:770px;width:129px;height:24px;background:#ffa3a3"></div><div style="position:absolute;left:0;top:795px;width:1347px;height:25px;background:#ffffff"></div><div style="position:absolute;left:0;top:819px;width:1347px;height:1px;background:#d9d9d9"></div><div style="position:absolute;left:190px;top:795px;width:129px;height:24px;background:#ffa3a3"></div><div style="position:absolute;left:0;top:820px;width:1347px;height:25px;background:#ebebeb"></div><div style="position:absolute;left:0;top:844px;width:1347px;height:1px;background:#d9d9d9"></div><div style="position:absolute;left:190px;top:820px;width:129px;height:24px;background:#ffa3a3"></div><div style="position:absolute;left:0;top:845px;width:1347px;height:25px;background:#ffffff"></div><div style="position:absolute;left:0;top:869px;width:1347px;height:1px;background:#d9d9d9"></div><div style="position:absolute;left:190px;top:845px;width:129px;height:24px;background:#ffa3a3"></div><div style="position:absolute;left:0;top:870px;width:1347px;height:25px;background:#ebebeb"></div><div style="position:absolute;left:0;top:894px;width:1347px;height:1px;background:#d9d9d9"></div><div style="position:absolute;left:190px;top:870px;width:129px;height:24px;background:#ffa3a3"></div><div style="position:absolute;left:0;top:894px;width:1347px;height:26px;background:#c8c8c8"></div><div style="position:absolute;left:59px;top:644px;width:1px;height:251px;background:#d4d4d4"></div><div style="position:absolute;left:189px;top:644px;width:1px;height:251px;background:#d4d4d4"></div><div style="position:absolute;left:319px;top:644px;width:1px;height:251px;background:#d4d4d4"></div><div style="position:absolute;left:449px;top:644px;width:1px;height:251px;background:#d4d4d4"></div><div style="position:absolute;left:624px;top:644px;width:1px;height:251px;background:#d4d4d4"></div><div style="position:absolute;left:754px;top:644px;width:1px;height:251px;background:#d4d4d4"></div><div style="position:absolute;left:897px;top:644px;width:1px;height:251px;background:#d4d4d4"></div><div style="position:absolute;left:1022px;top:644px;width:1px;height:251px;background:#d4d4d4"></div><div class="th" style="left:-200px;width:254px">交易量</div><div class="th" style="left:59px;width:125px">价位</div><div class="th" style="left:189px;width:125px">止损</div><div class="th" style="left:319px;width:125px">止盈</div><div class="th" style="left:449px;width:134px">时间</div><div class="th" style="left:624px;width:125px">价位</div><div class="th" style="left:754px;width:138px">盈利</div><div class="th" style="left:897px;width:120px">变更</div><div class="th" style="left:1022px;width:320px">注释</div><svg style="position:absolute;left:603px;top:652px" width="10" height="7"><path d="M0.5 6 L5 1 L9.5 6 z" fill="#1a1a1a"/></svg><div class="td" style="left:-200px;width:254.7px;top:670px;color:#000000">0.1</div><div class="td" style="left:59px;width:125.7px;top:670px;color:#000000">4140.14</div><div class="td" style="left:449px;width:170.7px;top:670px;color:#000000">2025.11.25 01:56:12</div><div class="td" style="left:624px;width:125.7px;top:670px;color:#000000">4141.08</div><div class="td" style="left:754px;width:138.7px;top:670px;color:#ff0000">-9.40</div><div class="td" style="left:897px;width:120.7px;top:670px;color:#ff0000">-0.02 %</div><div class="td" style="left:1022px;width:320.7px;top:670px;color:#000000">突破 Take Profit (IOC)</div><div class="td" style="left:-200px;width:254.7px;top:695px;color:#000000">0.1</div><div class="td" style="left:59px;width:125.7px;top:695px;color:#000000">4085.43</div><div class="td" style="left:189px;width:125.7px;top:695px;color:#000000">4085.43</div><div class="td" style="left:319px;width:125.7px;top:695px;color:#000000">4195.00</div><div class="td" style="left:449px;width:170.7px;top:695px;color:#000000">2025.11.25 01:56:12</div><div class="td" style="left:624px;width:125.7px;top:695px;color:#000000">4140.90</div><div class="td" style="left:754px;width:138.7px;top:695px;color:#0000ff">554.70</div><div class="td" style="left:897px;width:120.7px;top:695px;color:#0000ff">1.36 %</div><div class="td" style="left:1022px;width:320.7px;top:695px;color:#000000">突破 Buy (IOC)</div><div class="td" style="left:-200px;width:254.7px;top:720px;color:#000000">0.1</div><div class="td" style="left:59px;width:125.7px;top:720px;color:#000000">4140.32</div><div class="td" style="left:449px;width:170.7px;top:720px;color:#000000">2025.11.25 01:56:12</div><div class="td" style="left:624px;width:125.7px;top:720px;color:#000000">4140.90</div><div class="td" style="left:754px;width:138.7px;top:720px;color:#0000ff">5.80</div><div class="td" style="left:897px;width:120.7px;top:720px;color:#0000ff">0.01 %</div><div class="td" style="left:1022px;width:320.7px;top:720px;color:#000000">突破 Take Profit (IOC)</div><div class="td" style="left:-200px;width:254.7px;top:745px;color:#000000">0.1</div><div class="td" style="left:59px;width:125.7px;top:745px;color:#000000">1.30582</div><div class="td" style="left:189px;width:125.7px;top:745px;color:#000000">1.31627</div><div class="td" style="left:319px;width:125.7px;top:745px;color:#000000">1.28951</div><div class="td" style="left:449px;width:170.7px;top:745px;color:#000000">2025.11.25 16:02:45</div><div class="td" style="left:624px;width:125.7px;top:745px;color:#000000">1.31627</div><div class="td" style="left:754px;width:138.7px;top:745px;color:#ff0000">-104.50</div><div class="td" style="left:897px;width:120.7px;top:745px;color:#ff0000">-0.80 %</div><div class="td" style="left:1022px;width:320.7px;top:745px;color:#000000">Multi-EMA Sell (IOC)</div><div class="td" style="left:-200px;width:254.7px;top:770px;color:#000000">0.1</div><div class="td" style="left:59px;width:125.7px;top:770px;color:#000000">156.317</div><div class="td" style="left:189px;width:125.7px;top:770px;color:#000000">156.017</div><div class="td" style="left:319px;width:125.7px;top:770px;color:#000000">156.767</div><div class="td" style="left:449px;width:170.7px;top:770px;color:#000000">2025.11.25 16:46:18</div><div class="td" style="left:624px;width:125.7px;top:770px;color:#000000">156.017</div><div class="td" style="left:754px;width:138.7px;top:770px;color:#ff0000">-19.23</div><div class="td" style="left:897px;width:120.7px;top:770px;color:#ff0000">-0.19 %</div><div class="td" style="left:1022px;width:320.7px;top:770px;color:#000000">突破 Buy (IOC)</div><div class="td" style="left:-200px;width:254.7px;top:795px;color:#000000">0.1</div><div class="td" style="left:59px;width:125.7px;top:795px;color:#000000">156.684</div><div class="td" style="left:189px;width:125.7px;top:795px;color:#000000">155.895</div><div class="td" style="left:319px;width:125.7px;top:795px;color:#000000">157.865</div><div class="td" style="left:449px;width:170.7px;top:795px;color:#000000">2025.11.25 16:48:28</div><div class="td" style="left:624px;width:125.7px;top:795px;color:#000000">155.895</div><div class="td" style="left:754px;width:138.7px;top:795px;color:#ff0000">-50.61</div><div class="td" style="left:897px;width:120.7px;top:795px;color:#ff0000">-0.50 %</div><div class="td" style="left:1022px;width:320.7px;top:795px;color:#000000">Multi-EMA Buy (IOC)</div><div class="td" style="left:-200px;width:254.7px;top:820px;color:#000000">0.1</div><div class="td" style="left:59px;width:125.7px;top:820px;color:#000000">1.15453</div><div class="td" style="left:189px;width:125.7px;top:820px;color:#000000">1.15753</div><div class="td" style="left:319px;width:125.7px;top:820px;color:#000000">1.15003</div><div class="td" style="left:449px;width:170.7px;top:820px;color:#000000">2025.11.25 17:21:37</div><div class="td" style="left:624px;width:125.7px;top:820px;color:#000000">1.15753</div><div class="td" style="left:754px;width:138.7px;top:820px;color:#ff0000">-30.00</div><div class="td" style="left:897px;width:120.7px;top:820px;color:#ff0000">-0.26 %</div><div class="td" style="left:1022px;width:320.7px;top:820px;color:#000000">突破 Sell (IOC)</div><div class="td" style="left:-200px;width:254.7px;top:845px;color:#000000">0.1</div><div class="td" style="left:59px;width:125.7px;top:845px;color:#000000">0.64951</div><div class="td" style="left:189px;width:125.7px;top:845px;color:#000000">0.64951</div><div class="td" style="left:319px;width:125.7px;top:845px;color:#000000">0.64345</div><div class="td" style="left:449px;width:170.7px;top:845px;color:#000000">2025.11.26 03:41:30</div><div class="td" style="left:624px;width:125.7px;top:845px;color:#000000">0.64951</div><div class="td" style="left:754px;width:138.7px;top:845px;color:#000000">0.00</div><div class="td" style="left:897px;width:120.7px;top:845px;color:#000000">0.00 %</div><div class="td" style="left:1022px;width:320.7px;top:845px;color:#000000">Multi-EMA Sell (IOC)</div><div class="td" style="left:-200px;width:254.7px;top:870px;color:#000000">0.1</div><div class="td" style="left:59px;width:125.7px;top:870px;color:#000000">156.163</div><div class="td" style="left:189px;width:125.7px;top:870px;color:#000000">155.797</div><div class="td" style="left:319px;width:125.7px;top:870px;color:#000000">156.712</div><div class="td" style="left:449px;width:170.7px;top:870px;color:#000000">2025.11.26 04:11:03</div><div class="td" style="left:624px;width:125.7px;top:870px;color:#000000">155.797</div><div class="td" style="left:754px;width:138.7px;top:870px;color:#ff0000">-23.49</div><div class="td" style="left:897px;width:120.7px;top:870px;color:#ff0000">-0.23 %</div><div class="td" style="left:1022px;width:320.7px;top:870px;color:#000000">突破 Buy (IOC)</div><div class="td" style="left:-100px;width:122.4px;top:895px;font-weight:bold">.69</div><div class="td" style="left:754px;width:138.5px;top:895px;font-weight:bold">-309.95</div>
<div style="position:absolute;left:1347px;top:644px;width:21px;height:291px;background:#f0f0f0"></div>
<div style="position:absolute;left:1349px;top:836px;width:17px;height:80px;background:#c8c8c8"></div>
<svg style="position:absolute;left:1347px;top:644px" width="21" height="291">
 <path d="M6 15 L10.5 10.5 L15 15" fill="none" stroke="#333" stroke-width="1.3"/>
 <path d="M6 279.5 L10.5 284 L15 279.5" fill="none" stroke="#333" stroke-width="1.3"/>
</svg>
<div style="position:absolute;left:0;top:920px;width:1347px;height:15px;background:#ffffff"></div>
</div></body></html>
